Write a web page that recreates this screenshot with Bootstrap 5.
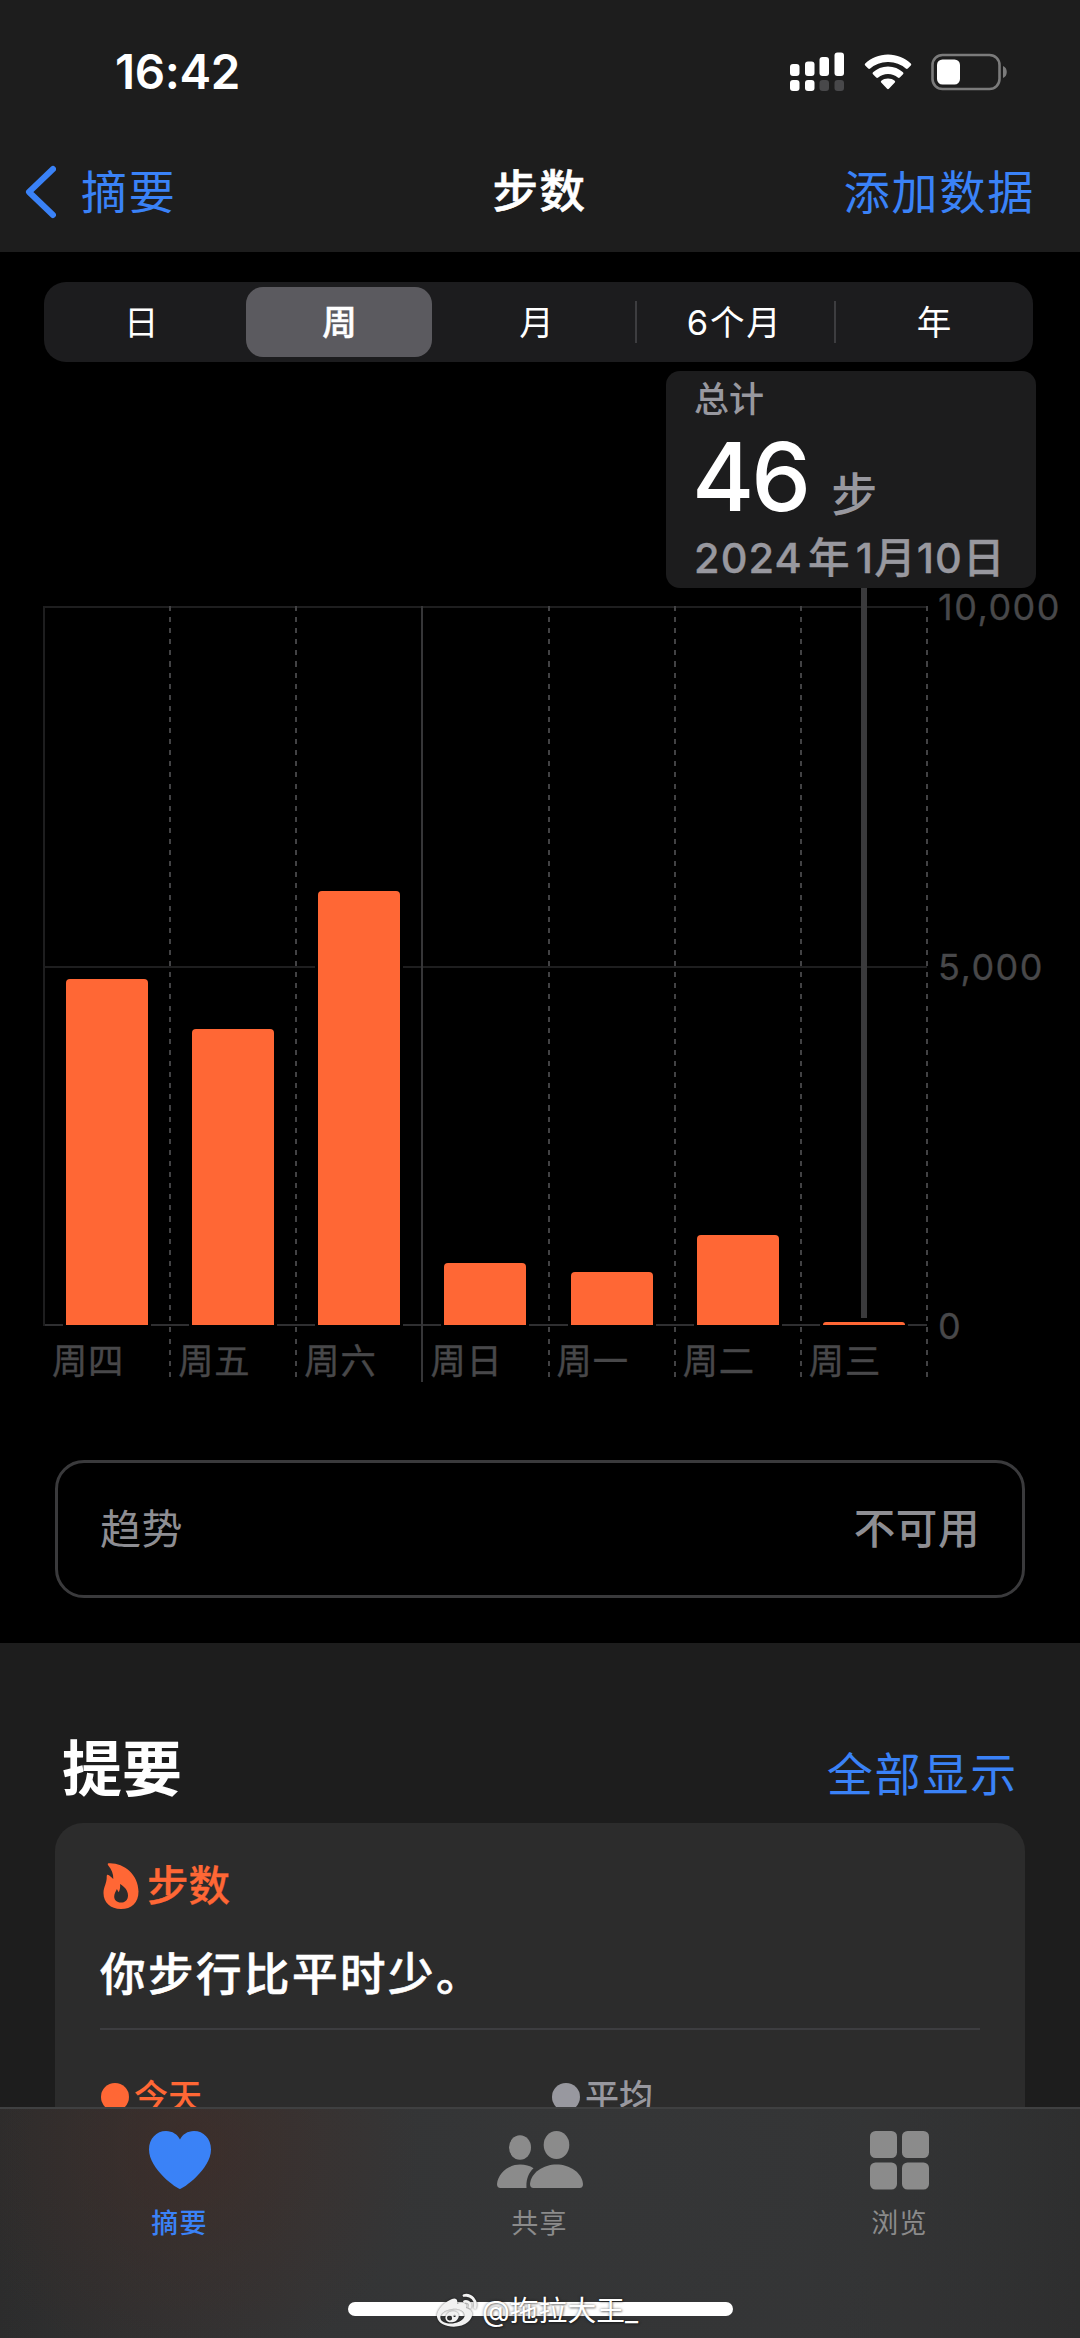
<!DOCTYPE html>
<html lang="zh-CN" data-bs-theme="dark">
<head>
<meta charset="utf-8">
<meta name="viewport" content="width=device-width, initial-scale=1">
<title>步数</title>
<link href="https://cdn.jsdelivr.net/npm/bootstrap@5.3.0/dist/css/bootstrap.min.css" rel="stylesheet">
<style>
  html, body { height: 2338px; overflow: hidden; }
  body { background: #000; color: #fff; font-family: Inter, "Noto Sans CJK SC", sans-serif; font-size: 45px; line-height: 1; }
  svg { display: block; flex: none; }
  .tint { color: #3a82f7; }
  .orange { color: #ff6735; }
  .muted { color: #98989f; }

  .top-area { height: 252px; background: #1d1d1d; }
  .status-row { height: 144px; padding: 0 72px 1px 115px; }
  .clock { font-size: 47.500px; font-weight: 600; letter-spacing: -.4px; }
  .status-icons { gap: 19px; }
  .title-row { height: 96px; padding: 0 47px 0 24px; }
  .title-row a, .show-all { font-size: 46px; letter-spacing: 1.8px; margin-right: -2px; text-decoration: none; }
  .title-row > * { flex: 1 1 0; }
  .back-link { gap: 25px; }
  .page-title { font-weight: 500; font-size: 45.500px; letter-spacing: 1.5px; padding-left: 22px; -webkit-text-stroke: .6px #fff; }

  .segments { margin: 30px 47px 0 44px; height: 80px; padding: 5px 3px 5px 0; border-radius: 22px; background: #1c1c1e; flex-wrap: nowrap; }
  .segments .nav-item { flex: 1 1 0; display: flex; position: relative; }
  .segments .nav-link { flex: 1; margin: 0 6px 0 5px; padding: 0 0 0 2px; color: #fff; font-size: 34.500px; line-height: 72px; height: 70px; text-align: center; border-radius: 17px; letter-spacing: 1.8px; }
  .segments .nav-item:first-child .nav-link { padding-right: 2px; }
  .segments .nav-item:last-child .nav-link { padding-left: 8px; }
  .segments .nav-link.active { background: #5b5a5f; font-weight: 500; -webkit-text-stroke: .5px #fff; }
  .split::before { content: ""; position: absolute; left: -1px; top: 14px; width: 2px; height: 42px; background: #3d3d40; }
  .split:last-child::before { left: 1px; }

  .readout-row { height: 244px; padding: 9px 44px 0 0; }
  .readout { width: 370px; height: 217px; border-radius: 14px; background: #1c1c1d; padding: 9px 0 0 28px; }
  .readout-head { font-size: 35px; line-height: 38px; font-weight: 500; }
  .readout-num { font-size: 95px; line-height: 70px; font-weight: 500; letter-spacing: -3px; margin: 24px 0 0 -2px; gap: 23px; }
  .readout-num small { font-size: 46px; font-weight: 500; letter-spacing: 0; line-height: 50px; margin-bottom: -7px; }
  .readout-date { font-size: 41.500px; font-weight: 500; line-height: 42px; margin-top: 25px; letter-spacing: 1.1px; word-spacing: -7px; white-space: nowrap; -webkit-text-stroke: .4px #98989f; }

  .chart { padding-left: 44px; height: 776px; }
  .plot { position: relative; width: 883px; height: 776px; }
  .hline { position: absolute; left: 0; right: 0; height: 2px; background: #1e1e1f; }
  .hline.base { background: #2f2f31; }
  .frame-left { position: absolute; left: -1px; top: 0; width: 2px; height: 720px; background: #1e1e1f; }
  .day { flex: 1 1 0; position: relative; padding-left: 22px; }
  .day::after { content: ""; position: absolute; right: -1px; top: 0; width: 2px; height: 776px; background: repeating-linear-gradient(#424244 0 5px, transparent 5px 11.1px); }
  .day.solid::after { background: #363638; }
  .bar-slot { height: 719px; width: 82px; }
  .bar { width: 82px; background: #ff6735; border-radius: 4px 4px 0 0; box-shadow: 0 0 0 3px #000; position: relative; }
  .day-name { margin: 19px 0 0 -14px; font-size: 35.300px; line-height: 36px; font-weight: 400; color: #48484a; letter-spacing: .8px; -webkit-text-stroke: .4px #48484a; }
  .marker { position: absolute; left: 817px; top: -18px; width: 6px; height: 730px; background: #3a3a3c; }
  .scale { height: 757px; margin: -18px 0 0 11px; font-size: 36px; line-height: 38px; color: #48484a; letter-spacing: 1.5px; -webkit-text-stroke: .3px #48484a; }

  .trend { margin: 78px 55px 0; height: 138px; border: 3px solid #3a3a3c; border-radius: 29px; padding: 1px 42px 0; font-size: 41px; letter-spacing: .6px; color: #8e8e93; }
  .trend-value { font-weight: 500; font-size: 41.500px; }
  .summary { margin-top: 45px; height: 695px; background: #1d1d1d; padding: 88px 55px 0; }
  .summary h2 { font-size: 60px; line-height: 76px; font-weight: 700; margin: 0 0 0 7px; }
  .show-all { margin-right: 7px; line-height: 86px; height: 84px; }
  .panel { margin-top: 8px; height: 600px; background: #2c2c2c; border: 0; border-radius: 28px; padding: 39px 45px 0; }
  .panel-kind { font-size: 41.500px; font-weight: 500; gap: 8px; line-height: 50px; height: 48px; padding-left: 3px; -webkit-text-stroke: .3px #ff6735; }
  .panel-kind svg { stroke: none; }
  .panel-note { font-size: 45.500px; font-weight: 500; letter-spacing: 2.500px; line-height: 52px; margin-top: 39px; -webkit-text-stroke: .6px #fff; }
  .panel-rule { height: 2px; background: #3d3d40; margin: 27px 0 49px; }
  .legend-item { font-size: 34px; font-weight: 500; line-height: 36px; gap: 5px; width: 451px; flex: none; }
  .dot { width: 28px; height: 28px; border-radius: 50%; background: currentColor; margin-left: 1px; }

  .tabs { height: 231px; padding: 0; align-items: flex-start; border-top: 2px solid #3f4041;
    background: radial-gradient(circle 230px at 190px 40px, rgba(70,42,34,.5), transparent), radial-gradient(circle 700px at 600px 60px, #353637, transparent), linear-gradient(90deg, #2b2b2b, #323334 30%, #323334 75%, #2b2b2b); }
  .tabs .nav-link { padding: 21px 1px 0 0; font-size: 27px; line-height: 30px; gap: 19px; letter-spacing: 1.2px; color: #8b8b8b; }
  .tabs .nav-link.active { color: #3a82f7; font-weight: 500; }
  .home-bar { position: absolute; left: 348px; bottom: 22px; width: 385px; height: 14px; border-radius: 7px; background: #fff; }
  .stamp { position: absolute; left: 436px; bottom: 7px; height: 40px; font-size: 28.800px; color: #fff; gap: 4px; text-shadow: 0 0 3px rgba(0,0,0,.5), 1px 1px 2px rgba(0,0,0,.35); white-space: nowrap; }
  .stamp svg { filter: drop-shadow(0 0 1px rgba(0,0,0,.6)); }
</style>
<script src="https://cdn.jsdelivr.net/npm/bootstrap@5.3.0/dist/js/bootstrap.bundle.min.js"></script>
</head>
<body>

<header class="top-area">
  <div class="status-row d-flex justify-content-between align-items-center">
    <span class="clock">16:42</span>
    <div class="status-icons d-flex align-items-center">
      <svg width="55" height="40" viewBox="0 0 55 40" fill="#fff">
        <rect x="0" y="12" width="9.5" height="12" rx="3"/><rect x="15" y="9.500" width="9.500" height="14.500" rx="3"/><rect x="29.500" y="5" width="9.500" height="19" rx="3"/><rect x="44.500" y="0.500" width="9.500" height="23.500" rx="3"/>
        <rect x="0" y="28" width="9.500" height="11" rx="3"/><rect x="15" y="28" width="9.500" height="11" rx="3"/>
        <g fill="#48484a"><rect x="29.500" y="28" width="9.500" height="11" rx="3"/><rect x="44.500" y="28" width="9.500" height="11" rx="3"/></g>
      </svg>
      <svg width="48" height="36" viewBox="0 0 48 36" fill="#fff">
        <path d="M24 .5C33 .5 41 4 46.800 9.600q1 1 0 2l-3 3q-1 .9-2 0A26 26 0 0 0 24 8 26 26 0 0 0 6.200 14.600q-1 .9-2 0l-3-3q-1-1 0-2C7 4 15 .5 24 .5Z"/>
        <path d="M24 12.500c6 0 11 2.300 15 5.800q1 1 0 2l-3.200 3.200q-1 .9-2 0A15 15 0 0 0 24 20a15 15 0 0 0-9.800 3.500q-1 .9-2 0L9 20.300q-1-1 0-2c4-3.500 9-5.800 15-5.800Z"/>
        <path d="M24 24.500c2.600 0 4.800.8 6.700 2.200q1 .9.100 1.900l-5.900 6.100q-.9.900-1.800 0l-5.900-6.100q-.9-1 .1-1.900c1.900-1.400 4.100-2.200 6.700-2.200Z"/>
      </svg>
      <svg width="77" height="38" viewBox="0 0 77 38">
        <rect x="1.500" y="2" width="67" height="34" rx="10" fill="none" stroke="#7b7b7b" stroke-width="2.600"/>
        <rect x="6" y="6.500" width="23" height="25" rx="5.500" fill="#fff"/>
        <path d="M72 13c5 1.500 5 10.500 0 12Z" fill="#7b7b7b"/>
      </svg>
    </div>
  </div>
  <nav class="title-row d-flex align-items-center">
    <a href="#" class="tint back-link d-flex align-items-center">
      <svg width="32" height="54" viewBox="0 0 32 54" fill="none" stroke="currentColor" stroke-width="6" stroke-linecap="round" stroke-linejoin="round"><path d="M29 4 5 27 29 50"/></svg>摘要</a>
    <div class="page-title text-center">步数</div>
    <a href="#" class="tint text-end">添加数据</a>
  </nav>
</header>

<ul class="nav nav-pills segments">
  <li class="nav-item"><a class="nav-link" href="#">日</a></li>
  <li class="nav-item"><a class="nav-link active" href="#">周</a></li>
  <li class="nav-item"><a class="nav-link" href="#">月</a></li>
  <li class="nav-item split"><a class="nav-link" href="#">6个月</a></li>
  <li class="nav-item split"><a class="nav-link" href="#">年</a></li>
</ul>

<div class="readout-row d-flex justify-content-end">
  <div class="readout">
    <div class="readout-head muted">总计</div>
    <div class="readout-num d-flex align-items-end">46<small class="muted">步</small></div>
    <div class="readout-date muted">2024 年 1月10日</div>
  </div>
</div>

<section class="chart d-flex">
  <div class="plot d-flex">
    <div class="hline" style="top:0"></div><div class="hline" style="top:360px"></div><div class="hline base" style="top:718px"></div><div class="frame-left"></div>
    <div class="day"><div class="bar-slot d-flex align-items-end"><div class="bar" style="height:346px"></div></div><div class="day-name">周四</div></div>
    <div class="day"><div class="bar-slot d-flex align-items-end"><div class="bar" style="height:296px"></div></div><div class="day-name">周五</div></div>
    <div class="day solid"><div class="bar-slot d-flex align-items-end"><div class="bar" style="height:434px"></div></div><div class="day-name">周六</div></div>
    <div class="day"><div class="bar-slot d-flex align-items-end"><div class="bar" style="height:62px"></div></div><div class="day-name">周日</div></div>
    <div class="day"><div class="bar-slot d-flex align-items-end"><div class="bar" style="height:53px"></div></div><div class="day-name">周一</div></div>
    <div class="day"><div class="bar-slot d-flex align-items-end"><div class="bar" style="height:90px"></div></div><div class="day-name">周二</div></div>
    <div class="day"><div class="bar-slot d-flex align-items-end"><div class="bar" style="height:3px"></div></div><div class="day-name">周三</div></div>
    <div class="marker"></div>
  </div>
  <div class="scale d-flex flex-column justify-content-between"><span>10,000</span><span>5,000</span><span>0</span></div>
</section>

<div class="trend d-flex justify-content-between align-items-center"><span>趋势</span><span class="trend-value">不可用</span></div>

<section class="summary">
  <div class="d-flex justify-content-between">
    <h2>提要</h2>
    <a href="#" class="tint show-all">全部显示</a>
  </div>
  <div class="card panel">
    <div class="panel-kind orange d-flex align-items-center">
      <svg width="36" height="48" viewBox="0 0 36 48"><path fill="currentColor" fill-rule="evenodd" d="M5.500 1.200C20 .2 35.500 12 35.500 29.500 35.500 41 28.500 47 18 47S.5 40.500.5 31C.5 24.500 4 21.500 3.700 14.500 3.600 12.800 4.800 12.300 6 13.300c1.600 1.300 2.800 2.300 4.300 3.800C10.500 11.500 8.500 7.500 5.300 3.500 4.500 2.400 4.600 1.300 5.500 1.200ZM17 22c.6 3-.2 5.600-1.200 8.200-.8-1-1.200-2-1.900-3.200-1 2.500-2.700 4.500-2.700 7.600 0 3.600 2.700 6 6.600 6 4.200 0 7.200-2.800 7.200-7.200C25 28.500 21.500 24.500 17 22Z"/></svg>步数</div>
    <div class="panel-note">你步行比平时少。</div>
    <div class="panel-rule"></div>
    <div class="d-flex">
      <div class="legend-item orange d-flex align-items-center"><span class="dot"></span>今天</div>
      <div class="legend-item muted d-flex align-items-center"><span class="dot"></span>平均</div>
    </div>
  </div>
</section>

<nav class="navbar fixed-bottom tabs">
  <div class="nav nav-justified w-100 flex-nowrap">
    <a href="#" class="nav-item nav-link active d-flex flex-column align-items-center">
      <svg width="64" height="60" viewBox="0 0 64 60" fill="currentColor"><path d="M32 59C29.500 59 1 39.500 1 19.500 1 8.500 8.500 1 18 1c6.500 0 11.500 3.500 14 8.500C34.500 4.500 39.500 1 46 1c9.500 0 17 7.500 17 18.500C63 39.500 34.500 59 32 59Z"/></svg>摘要</a>
    <a href="#" class="nav-item nav-link d-flex flex-column align-items-center">
      <svg width="88" height="60" viewBox="0 0 88 60" fill="currentColor"><ellipse cx="24" cy="17.500" rx="11" ry="12.200"/><ellipse cx="60.500" cy="15" rx="12.800" ry="14"/><path d="M4.500 58Q1 58 1 54C2 43 12.500 34.500 24 34.500q8 0 13.500 3.700C32 43.500 30 50 30.500 58Z"/><path d="M37.500 58q-3.500 0-3.500-4C35 42.500 47.500 34.500 60.500 34.500S86 42.500 87 54q0 4-3.500 4Z"/></svg>共享</a>
    <a href="#" class="nav-item nav-link d-flex flex-column align-items-center">
      <svg width="59" height="60" viewBox="0 0 59 60" fill="currentColor"><rect y="1" width="27" height="27" rx="5.500"/><rect x="32" y="1" width="27" height="27" rx="5.500"/><rect y="32.500" width="27" height="27" rx="5.500"/><rect x="32" y="32.500" width="27" height="27" rx="5.500"/></svg>浏览</a>
  </div>
  <div class="home-bar"></div>
  <div class="stamp d-flex align-items-center">
    <svg width="42" height="36" viewBox="0 0 42 36"><path fill="#f1f1f1" fill-rule="evenodd" d="M16 6c3-1.500 6.500 0 5 5 4.500-2 11-2 9 4 9 2.500 7 9.500 2 14C24 36.500 3 35 1 24 0 17 9 8.500 16 6ZM16 16C8 17 3.500 21.500 4.500 25.500 6 32.500 25 32.500 28.500 23.500 29.500 17.500 22 15 16 16Z"/><path fill="#f1f1f1" fill-rule="evenodd" d="M15 18.500c5-1 9 2 7.500 6-1.500 4.500-7.500 6-11 4-4.500-3-1-9 3.500-10ZM13.500 22.500a2.500 2.500 0 1 0 .1 5 2.500 2.500 0 0 0-.1-5Zm5-.8a1.200 1.200 0 1 0 .1 2.400 1.200 1.200 0 0 0-.1-2.400Z"/><path fill="none" stroke="#f1f1f1" stroke-width="2.800" stroke-linecap="round" d="M28 2.500c7-1.500 13 5 11 12M28.500 8.500c4-.8 6.500 2 5.500 5.500"/></svg>
    <span>@拖拉大王_</span>
  </div>
</nav>
</body>
</html>
